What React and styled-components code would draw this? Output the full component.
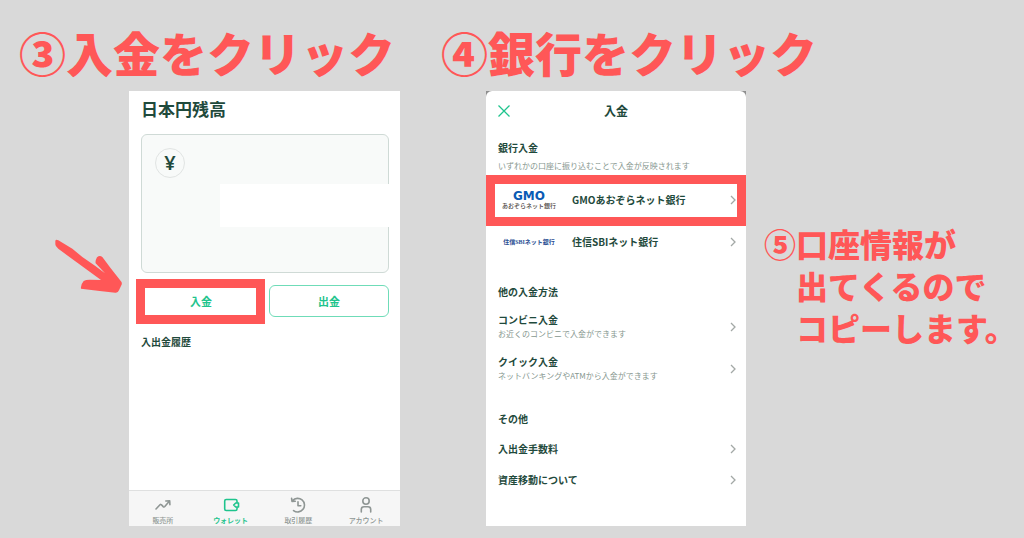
import React from 'react';
import styled, { createGlobalStyle, ThemeProvider } from 'styled-components';

const theme = {
  page: '#d9d9d9',
  coral: '#ff5757',
  dark: '#1f4a3c',
  muted: '#87978f',
  green: '#1fc48d',
  nav: '#8f9694',
  chevron: '#a3a8a6',
};

const GlobalStyle = createGlobalStyle`
  *, *::before, *::after {
    box-sizing: border-box;
  }
  body {
    margin: 0;
    background: ${theme.page};
    font-family: 'Noto Sans CJK JP', 'Noto Sans', sans-serif;
  }
  h1, h2, h3, p, ul {
    margin: 0;
    padding: 0;
  }
  a {
    color: inherit;
    text-decoration: none;
  }
  button {
    padding: 0;
    border: 0;
    background: none;
    font: inherit;
    cursor: pointer;
  }
`;

const Page = styled.main`
  display: grid;
  grid-template-columns: minmax(0, 109fr) minmax(0, 81fr) minmax(0, 66fr);
  grid-template-rows: 91px auto;
  padding-bottom: 12px;
`;

const StepTitle = styled.h1`
  grid-column: ${({ $wide }) => ($wide ? 'span 2' : 'auto')};
  padding: 27px 0 0 ${({ $wide }) => ($wide ? '5px' : '19px')};
  color: ${({ theme }) => theme.coral};
  font-size: 47px;
  font-weight: 900;
  line-height: 50px;
  white-space: nowrap;
`;

const WalletStep = styled.section`
  display: flex;
  padding: 0 36px 0 55px;
  gap: 6px;
`;

const Arrow = styled.svg`
  flex: none;
  width: 68px;
  height: 55px;
  margin-top: 148px;
`;

const Wallet = styled.div`
  flex: 1;
  display: flex;
  flex-direction: column;
  background: #fff;
`;

const WalletBody = styled.div`
  flex: 1;
  padding: 6px 11px 0 12px;
`;

const WalletTitle = styled.h2`
  color: ${({ theme }) => theme.dark};
  font-size: 17px;
  font-weight: 700;
  line-height: 24px;
`;

const BalanceCard = styled.div`
  height: 139px;
  margin-top: 13px;
  padding: 13px 0 0 13px;
  border: 1px solid #cfdad6;
  border-radius: 6px;
  background: #f8faf9;
`;

const Yen = styled.span`
  display: flex;
  align-items: center;
  justify-content: center;
  width: 30px;
  height: 30px;
  border: 1px solid #e1e4e3;
  border-radius: 50%;
  color: ${({ theme }) => theme.dark};
  font-family: 'Noto Sans', sans-serif;
  font-size: 20px;
  font-weight: 600;
  line-height: 28px;
`;

const BalanceMask = styled.div`
  height: 43px;
  margin: 6px -2px 0 65px;
  background: #fff;
`;

const Actions = styled.div`
  display: grid;
  grid-template-columns: 1fr 1fr;
  gap: 8px;
  margin-top: 12px;
`;

const ActionButton = styled.button`
  position: relative;
  height: 32px;
  border: 1px solid #6fdcb8;
  border-radius: 6px;
  color: ${({ theme }) => theme.green};
  font-size: 11px;
  font-weight: 700;
  line-height: 16px;
`;

const Highlight = styled.span`
  position: absolute;
  inset: ${({ $inset }) => $inset};
  border: 9px solid ${({ theme }) => theme.coral};
  pointer-events: none;
`;

const HistoryTitle = styled.h3`
  margin-top: 17px;
  color: ${({ theme }) => theme.dark};
  font-size: 10px;
  font-weight: 700;
  line-height: 16px;
`;

const TabBar = styled.nav`
  display: grid;
  grid-template-columns: repeat(4, 1fr);
  height: 36px;
  border-top: 1px solid #dfe0e0;
  background: #f6f6f6;
`;

const Tab = styled.a`
  display: flex;
  flex-direction: column;
  align-items: center;
  padding-top: 5px;
  color: ${({ theme, $active }) => ($active ? theme.green : theme.nav)};
  font-size: 7px;
  font-weight: ${({ $active }) => ($active ? 700 : 500)};
  line-height: 13px;
  white-space: nowrap;

  svg {
    width: 18px;
    height: 18px;
    fill: none;
    stroke: currentColor;
    stroke-width: 1.6;
    stroke-linecap: round;
    stroke-linejoin: round;
  }
`;

const DepositStep = styled.section`
  padding: 0 14px 0 50px;
`;

const SheetBackdrop = styled.div`
  background: linear-gradient(#8f8f8f 12px, #fff 12px);
`;

const Sheet = styled.div`
  padding-bottom: 31px;
  border-radius: 6px 6px 0 0;
  background: #fff;
  color: ${({ theme }) => theme.dark};
`;

const SheetHeader = styled.header`
  display: grid;
  grid-template-columns: 12px 1fr 12px;
  align-items: center;
  height: 39px;
  padding: 0 12px;
  text-align: center;
`;

const CloseButton = styled.button`
  display: flex;

  svg {
    width: 12px;
    height: 12px;
    fill: none;
    stroke: ${({ theme }) => theme.green};
    stroke-width: 1.3;
  }
`;

const SheetTitle = styled.h2`
  font-size: 12px;
  font-weight: 700;
  line-height: 16px;
`;

const Group = styled.section`
  padding-top: ${({ $first }) => ($first ? '10px' : '21px')};
`;

const GroupTitle = styled.h3`
  padding: 0 12px;
  font-size: 10px;
  font-weight: 700;
  line-height: 16px;
`;

const Caption = styled.p`
  color: ${({ theme }) => theme.muted};
  font-size: 8px;
  font-weight: 400;
  line-height: 14px;
  white-space: nowrap;
`;

const GroupCaption = styled(Caption)`
  padding: 3px 12px 0;
`;

const Rows = styled.ul`
  padding-top: 6px;
  list-style: none;
`;

const Row = styled.a`
  position: relative;
  display: flex;
  align-items: center;
  height: ${({ $compact }) => ($compact ? '31px' : '42px')};
  padding: 0 10px 0 ${({ $bank }) => ($bank ? '18px' : '12px')};
`;

const RowText = styled.div`
  flex: 1;
`;

const RowName = styled.p`
  font-size: 10px;
  font-weight: 700;
  line-height: 14px;
  white-space: nowrap;
`;

const Chevron = styled.svg`
  width: 6px;
  height: 10px;
  fill: none;
  stroke: ${({ theme }) => theme.chevron};
  stroke-width: 1.3;
`;

const BankLogo = styled.span`
  flex: none;
  display: flex;
  flex-direction: column;
  align-items: center;
  width: 50px;
  margin-right: 18px;
  white-space: nowrap;
`;

const GmoMark = styled.span`
  color: #0a5bb5;
  font-family: 'DejaVu Sans', sans-serif;
  font-size: 12px;
  font-weight: 700;
  line-height: 12px;
`;

const GmoName = styled.span`
  color: #4a4340;
  font-size: 6px;
  font-weight: 500;
  line-height: 8px;
`;

const SbiName = styled.span`
  color: #2b4f94;
  font-family: 'Liberation Serif', 'Noto Sans CJK JP', serif;
  font-size: 6px;
  font-weight: 700;
  line-height: 8px;
`;

const Note = styled.p`
  display: grid;
  grid-template-columns: auto 1fr;
  align-content: start;
  padding-top: 131px;
  padding-left: 4px;
  color: ${({ theme }) => theme.coral};
  font-size: 32px;
  font-weight: 900;
  line-height: 42px;
  white-space: nowrap;
`;

const TrendIcon = () => (
  <svg viewBox="0 0 18 18">
    <path d="M2 13L6 8.8Q6.8 8 7.6 8.9L9.2 10.6Q10 11.4 10.8 10.5L15.3 5.2M11.8 5L15.7 4.8L15.9 8.6" />
  </svg>
);

const WalletIcon = () => (
  <svg viewBox="0 0 18 18">
    <path d="M15 6.5V5Q15 3.5 13.5 3.5H4.2Q2.7 3.5 2.7 5V13Q2.7 14.5 4.2 14.5H13.5Q15 14.5 15 13V11.5" />
    <path d="M16.5 7H13.7L11.7 9L13.7 11H16.5Z" />
  </svg>
);

const HistoryIcon = () => (
  <svg viewBox="0 0 18 18">
    <path d="M3.6 4.6A6.8 6.8 0 1 1 4.6 14.6M2.6 2.3L3 5.4L6.3 5.2M9 5.8V9.8H11.8" />
  </svg>
);

const AccountIcon = () => (
  <svg viewBox="0 0 18 18">
    <circle cx="9" cy="5" r="3.2" />
    <path d="M4.3 16V13.4Q4.3 10.8 7 10.8H11Q13.7 10.8 13.7 13.4V16" />
  </svg>
);

const tabs = [
  { label: '販売所', Icon: TrendIcon },
  { label: 'ウォレット', Icon: WalletIcon, active: true },
  { label: '取引履歴', Icon: HistoryIcon },
  { label: 'アカウント', Icon: AccountIcon },
];

const banks = [
  {
    name: 'GMOあおぞらネット銀行',
    selected: true,
    logo: (
      <>
        <GmoMark>GMO</GmoMark>
        <GmoName>あおぞらネット銀行</GmoName>
      </>
    ),
  },
  { name: '住信SBIネット銀行', logo: <SbiName>住信SBIネット銀行</SbiName> },
];

const methods = [
  { name: 'コンビニ入金', caption: 'お近くのコンビニで入金ができます' },
  { name: 'クイック入金', caption: 'ネットバンキングやATMから入金ができます' },
];

const others = [{ name: '入出金手数料' }, { name: '資産移動について' }];

const ListRow = ({ name, caption, logo, selected, compact }) => (
  <li>
    <Row href="#" $bank={!!logo} $compact={compact}>
      {logo && <BankLogo>{logo}</BankLogo>}
      <RowText>
        <RowName>{name}</RowName>
        {caption && <Caption>{caption}</Caption>}
      </RowText>
      <Chevron viewBox="0 0 6 10">
        <path d="M1 1L5 5L1 9" />
      </Chevron>
      {selected && <Highlight $inset="-4px 0 -5px" />}
    </Row>
  </li>
);

const App = () => (
  <ThemeProvider theme={theme}>
    <GlobalStyle />
    <Page>
      <StepTitle>③入金をクリック</StepTitle>
      <StepTitle $wide>④銀行をクリック</StepTitle>

      <WalletStep>
        <Arrow viewBox="46 26 204 165" fill={theme.coral}>
          <path d="M47 32Q48 26 56 30L98 55L128 80L166 106L196 129L168 99Q166 92 172 81Q180 73 188 80L212 112L245 154Q248 159 245 165L238 180Q235 188 227 187L180 182L124 175Q122 164 132 152Q138 148 150 148L184 149L62 60Q48 50 47 42Z" />
        </Arrow>
        <Wallet>
          <WalletBody>
            <WalletTitle>日本円残高</WalletTitle>
            <BalanceCard>
              <Yen>¥</Yen>
              <BalanceMask />
            </BalanceCard>
            <Actions>
              <ActionButton type="button">
                入金
                <Highlight $inset="-7px -5px -8px -6px" />
              </ActionButton>
              <ActionButton type="button">出金</ActionButton>
            </Actions>
            <HistoryTitle>入出金履歴</HistoryTitle>
          </WalletBody>
          <TabBar>
            {tabs.map(({ label, Icon, active }) => (
              <Tab key={label} href="#" $active={active}>
                <Icon />
                {label}
              </Tab>
            ))}
          </TabBar>
        </Wallet>
      </WalletStep>

      <DepositStep>
        <SheetBackdrop>
          <Sheet>
            <SheetHeader>
              <CloseButton type="button" aria-label="閉じる">
                <svg viewBox="0 0 12 12">
                  <path d="M0.5 0.5L11.5 11.5M11.5 0.5L0.5 11.5" />
                </svg>
              </CloseButton>
              <SheetTitle>入金</SheetTitle>
            </SheetHeader>
            <Group $first>
              <GroupTitle>銀行入金</GroupTitle>
              <GroupCaption>いずれかの口座に振り込むことで入金が反映されます</GroupCaption>
              <Rows>
                {banks.map((bank) => (
                  <ListRow key={bank.name} {...bank} />
                ))}
              </Rows>
            </Group>
            <Group>
              <GroupTitle>他の入金方法</GroupTitle>
              <Rows>
                {methods.map((method) => (
                  <ListRow key={method.name} {...method} />
                ))}
              </Rows>
            </Group>
            <Group>
              <GroupTitle>その他</GroupTitle>
              <Rows>
                {others.map((other) => (
                  <ListRow key={other.name} compact {...other} />
                ))}
              </Rows>
            </Group>
          </Sheet>
        </SheetBackdrop>
      </DepositStep>

      <Note>
        <span>⑤</span>
        <span>
          口座情報が
          <br />
          出てくるので
          <br />
          コピーします。
        </span>
      </Note>
    </Page>
  </ThemeProvider>
);

export default App;
